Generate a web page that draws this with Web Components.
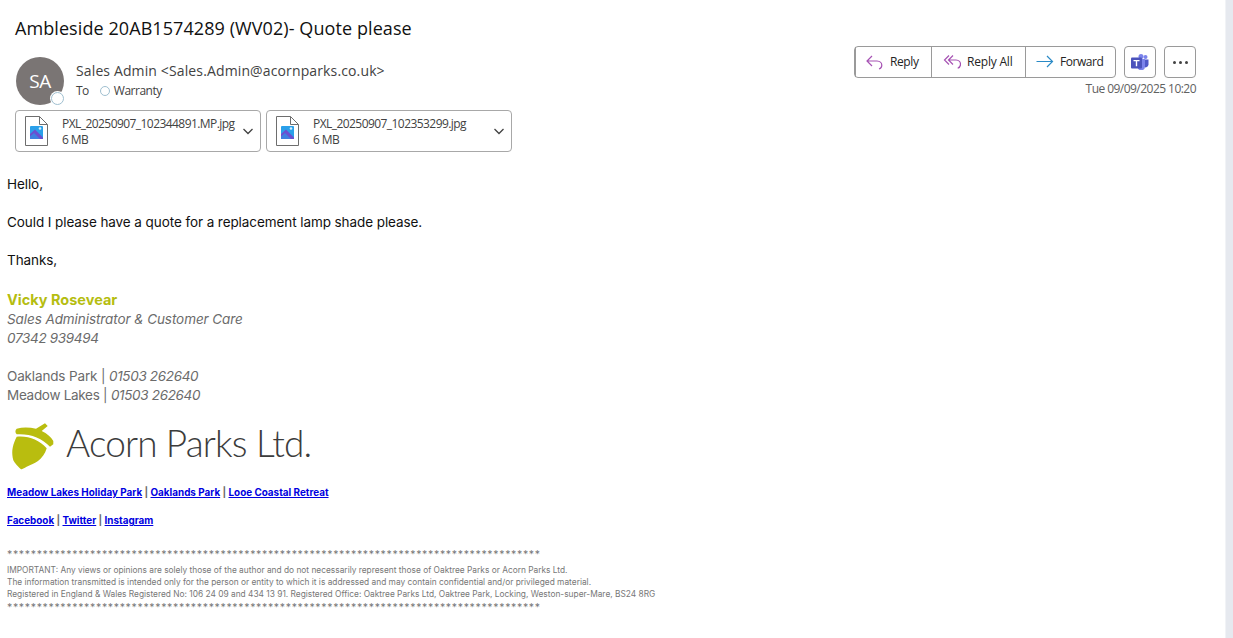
<!DOCTYPE html>
<html>
<head>
<meta charset="utf-8">
<title>Ambleside 20AB1574289 (WV02)- Quote please</title>
<style>
  html, body { margin: 0; height: 100%; background: #fff; overflow: hidden; }
  body { display: flex; height: 638px; }
  mail-view { flex: 1; min-width: 0; }
  side-strip { width: 8px; }
</style>
</head>
<body>
<mail-view>
  <mail-header></mail-header>
  <mail-body></mail-body>
</mail-view>
<side-strip></side-strip>

<script>
const UI_FONT = `"Open Sans", "Noto Sans", sans-serif`;
const BODY_FONT = `Inter, "Liberation Sans", sans-serif`;

class SideStrip extends HTMLElement {
    constructor() {
        super();
        this.attachShadow({ mode: 'open' });
        this.shadowRoot.innerHTML = `<style>
            :host { display: block; background: #e6e9ef; border-left: 1px solid #f1f3f6; box-sizing: border-box; }
        </style>`;
    }
}

class MailView extends HTMLElement {
    constructor() {
        super();
        this.attachShadow({ mode: 'open' });
        this.shadowRoot.innerHTML = `<style>
            :host { display: block; }
        </style><slot></slot>`;
    }
}

class ActionGroup extends HTMLElement {
    constructor() {
        super();
        this.attachShadow({ mode: 'open' });
        const icons = {
            reply: `<path d="M7 3 2 8l5 5M2.500 8H12c3.200 0 4.800 2.200 4.800 4.200 0 1.800-1.200 3.300-2.800 3.800" stroke="#a652b3"/>`,
            all: `<path d="M6 2.500 1.500 7 6 11.500M10 2.500 5.500 7l4.500 4.500M6 7h7c3 0 4.500 2.200 4.500 4.300 0 1.900-1.200 3.400-2.800 4" stroke="#a652b3"/>`,
            forward: `<path d="M11 3l5.500 5.500L11 14M.5 8.500h15.500" stroke="#2a8ac6"/>`
        };
        const item = (k, label, w, pad, gap, ls) => `<button style="width:${w}px;padding-left:${pad}px;gap:${gap}px;letter-spacing:${ls}px"><svg width="18" height="18" viewBox="0 0 18 18" fill="none" stroke-width="1.200">${icons[k]}</svg><span>${label}</span></button>`;
        this.shadowRoot.innerHTML = `<style>
            :host { display: flex; height: 32px; box-sizing: border-box; border: 1px solid #9a9a9a; border-radius: 4px; background: #fff; }
            button { all: unset; box-sizing: border-box; display: flex; align-items: center; font: 12px ${UI_FONT}; color: #242424; border-left: 1px solid #9a9a9a; }
            button:first-child { border-left: 0; }
            span { transform: translateY(-1px); }
            svg { flex: none; }
        </style>${item('reply', 'Reply', 76, 9, 7, -0.4)}${item('all', 'Reply All', 94, 11, 6, -0.2)}${item('forward', 'Forward', 90, 10, 6, -0.45)}`;
    }
}

class IconButton extends HTMLElement {
    constructor() {
        super();
        this.attachShadow({ mode: 'open' });
        this.shadowRoot.innerHTML = `<style>
            :host { display: flex; align-items: center; justify-content: center; width: 32px; height: 32px; box-sizing: border-box; border: 1px solid #9a9a9a; border-radius: 4px; background: #fff; }
        </style><slot></slot>`;
    }
}

class AttachmentCard extends HTMLElement {
    constructor() {
        super();
        this.attachShadow({ mode: 'open' });
        const name = this.getAttribute('name');
        const size = this.getAttribute('size');
        const w = this.getAttribute('width');
        this.shadowRoot.innerHTML = `<style>
            :host { display: flex; align-items: center; width: ${w}px; height: 42px; box-sizing: border-box; border: 1px solid #a8a8a8; border-radius: 4px; padding-left: 9px; background: #fff; }
            .text { flex: 1; margin-left: 14px; padding-top: 2px; font: 12px/16px ${UI_FONT}; letter-spacing: -0.56px; color: #424242; white-space: nowrap; }
            .chev { flex: none; margin-right: 6px; }
        </style>
        <svg width="23" height="30" viewBox="0 0 23 30" fill="none">
            <path d="M.5 .5h14l8 8v21H.5z" fill="#fff" stroke="#6e6e6e"/>
            <path d="M14.500 .5v8h8" stroke="#6e6e6e"/>
            <rect x="5" y="10" width="13" height="13" rx="1" fill="#2aa0ea"/>
            <path d="M5 23v-5l5-4.500 8 8V23z" fill="#6a4fd0"/>
            <path d="M5 23v-2.500l4-3.500 6 6z" fill="#3f7fe0"/>
            <circle cx="15" cy="12.500" r="1.300" fill="#d8f0ff"/>
        </svg>
        <div class="text"><div>${name}</div><div>${size}</div></div>
        <svg class="chev" width="12" height="12" viewBox="0 0 12 12" fill="none"><path d="M1.500 4 6 8.500 10.500 4" stroke="#424242" stroke-width="1.300"/></svg>`;
    }
}

class MailHeader extends HTMLElement {
    constructor() {
        super();
        this.attachShadow({ mode: 'open' });
        this.shadowRoot.innerHTML = `<style>
            :host { display: block; font-family: ${UI_FONT}; height: 152px; box-sizing: border-box; padding: 16px 29px 0 15px; }
            h1 { margin: 0; font: 400 18px/25px ${UI_FONT}; letter-spacing: 0.08px; color: #111; }
            .row { display: flex; justify-content: space-between; margin-top: 5px; height: 69px; }
            .who { display: flex; padding-top: 11px; }
            .avatar { position: relative; width: 48px; height: 48px; margin-left: 1px; border-radius: 50%; background: #7a7574; color: #fff; font: 19px/48px ${UI_FONT}; text-align: center; letter-spacing: -0.500px; }
            .presence { position: absolute; right: 0; bottom: 0; width: 11px; height: 11px; border-radius: 50%; border: 1px solid #9fbfd0; background: #fff; box-shadow: 0 0 0 1px #fff; }
            .lines { margin-left: 12px; padding-top: 5px; color: #424242; }
            .from { font: 14px/20px ${UI_FONT}; letter-spacing: 0.13px; margin-top: -1px; }
            .to { display: flex; align-items: center; font: 12px/17px ${UI_FONT}; letter-spacing: -0.5px; margin-top: 1px; }
            .dot { width: 8px; height: 8px; border-radius: 50%; border: 1px solid #9fbfd0; margin: 0 4px 0 11px; }
            .right { display: flex; flex-direction: column; align-items: flex-end; }
            .actions { display: flex; gap: 8px; }
            .date { font: 12px/16px ${UI_FONT}; letter-spacing: -0.54px; color: #616161; margin-top: 3px; }
            .atts { display: flex; gap: 5px; margin-top: -5px; }
            .dots { display: flex; gap: 3px; }
            .dots i { width: 3px; height: 3px; border-radius: 50%; background: #424242; }
        </style>
        <h1>Ambleside 20AB1574289 (WV02)- Quote please</h1>
        <div class="row">
            <div class="who">
                <div class="avatar">SA<span class="presence"></span></div>
                <div class="lines">
                    <div class="from">Sales Admin &lt;Sales.Admin@acornparks.co.uk&gt;</div>
                    <div class="to">To<span class="dot"></span>Warranty</div>
                </div>
            </div>
            <div class="right">
                <div class="actions">
                    <action-group></action-group>
                    <icon-button>
                        <svg width="18" height="16" viewBox="0 0 18 16">
                            <circle cx="14.500" cy="3" r="2" fill="#7b83eb"/>
                            <circle cx="10" cy="2.500" r="2.500" fill="#7b83eb"/>
                            <path d="M12 5.500h5.500v5a3 3 0 0 1-5.500 1.500z" fill="#5059c9"/>
                            <path d="M6 5h8v7.500a3.700 3.700 0 0 1-7.500 0z" fill="#7b83eb"/>
                            <rect x="0" y="3.500" width="11" height="11" rx="1" fill="#4b53bc"/>
                            <path d="M2.500 6h6v1.300h-2.300v5h-1.400v-5H2.500z" fill="#fff"/>
                        </svg>
                    </icon-button>
                    <icon-button><div class="dots"><i></i><i></i><i></i></div></icon-button>
                </div>
                <div class="date">Tue 09/09/2025 10:20</div>
            </div>
        </div>
        <div class="atts">
            <attachment-card name="PXL_20250907_102344891.MP.jpg" size="6 MB" width="246"></attachment-card>
            <attachment-card name="PXL_20250907_102353299.jpg" size="6 MB" width="246"></attachment-card>
        </div>`;
    }
}

class AcornLogo extends HTMLElement {
    constructor() {
        super();
        this.attachShadow({ mode: 'open' });
        this.shadowRoot.innerHTML = `<style>
            :host { display: flex; align-items: center; height: 50px; margin: 16px 0 0 5px; }
            span { font: 300 37px/50px Lato, "Open Sans", sans-serif; letter-spacing: -0.85px; color: #3c3c3c; margin-left: 12px; white-space: nowrap; transform: translateY(-3px); }
            svg { flex: none; }
        </style>
        <svg width="42" height="48" viewBox="0 0 42 48">
            <path d="M4.700 6.700C11 5 18 5.500 24 6.700L33 1.300 35.700 4 29.700 9C35 11.500 39 15 41.300 19V22.300L38 24.700C30 16 18 11.500 4.700 12.300 3 11 3 8 4.700 6.700z" fill="#b9bd0f"/>
            <path d="M4.700 14.700C16 13.500 27 17.500 34.700 26.300 33 32 30 36 26 39 22 41.500 19 42.500 16.300 44 14 45 12 46.500 9.700 47.300 8.800 47.300 8 46.500 7.300 45.700 3.500 42 1 39 .7 35.700 .2 32 0 29 .7 25.700 1.500 21.500 3 18 4.700 14.700z" fill="#b9bd0f"/>
        </svg>
        <span>Acorn Parks Ltd.</span>`;
    }
}

class MailBody extends HTMLElement {
    constructor() {
        super();
        this.attachShadow({ mode: 'open' });
        const stars = '*'.repeat(90);
        this.shadowRoot.innerHTML = `<style>
            :host { display: block; padding: 23px 0 0 7px; font: 13.500px/19px ${BODY_FONT}; letter-spacing: -0.08px; color: #111; }
            p { margin: 0 0 19px; }
            .sig { color: #6b6b6b; }
            .name { color: #b5bd10; font-weight: 700; font-size: 14.500px; letter-spacing: 0; line-height: 21px; margin-top: 1px; }
            .sig i { font-style: italic; }
            .num { letter-spacing: -0.33px; }
            .blank { height: 19px; }
            .links { font: 700 9.900px/13px ${BODY_FONT}; letter-spacing: 0; color: #6b6b6b; margin: 15px 0; }
            a { color: #0000e0; text-decoration: underline; }
            .legal { font: 8.350px/12px ${BODY_FONT}; letter-spacing: 0; color: #777; margin-top: 21px; white-space: nowrap; }
            .legal .st { font-size: 10.500px; line-height: 14px; letter-spacing: .67px; }
            .legal .txt { margin: 2px 0 1px; }
        </style>
        <p>Hello,</p>
        <p>Could I please have a quote for a replacement lamp shade please.</p>
        <p>Thanks,</p>
        <div class="sig">
            <div class="name">Vicky Rosevear</div>
            <div><i>Sales Administrator &amp; Customer Care</i></div>
            <div><i class="num">07342 939494</i></div>
            <div class="blank"></div>
            <div><span style="letter-spacing:-0.15px">Oaklands Park |</span> <i class="num">01503 262640</i></div>
            <div><span style="letter-spacing:-0.3px">Meadow Lakes |</span> <i class="num">01503 262640</i></div>
        </div>
        <acorn-logo></acorn-logo>
        <div class="links"><a>Meadow Lakes Holiday Park</a> | <a>Oaklands Park</a> | <a>Looe Coastal Retreat</a></div>
        <div class="links"><a>Facebook</a> | <a>Twitter</a> | <a>Instagram</a></div>
        <div class="legal">
            <div class="st">${stars}</div>
            <div class="txt">IMPORTANT: Any views or opinions are solely those of the author and do not necessarily represent those of Oaktree Parks or Acorn Parks Ltd.<br>
            The information transmitted is intended only for the person or entity to which it is addressed and may contain confidential and/or privileged material.<br>
            Registered in England &amp; Wales Registered No: 106 24 09 and 434 13 91. Registered Office: Oaktree Parks Ltd, Oaktree Park, Locking, Weston-super-Mare, BS24 8RG</div>
            <div class="st">${stars}</div>
        </div>`;
    }
}

customElements.define('side-strip', SideStrip);
customElements.define('mail-view', MailView);
customElements.define('action-group', ActionGroup);
customElements.define('icon-button', IconButton);
customElements.define('attachment-card', AttachmentCard);
customElements.define('mail-header', MailHeader);
customElements.define('acorn-logo', AcornLogo);
customElements.define('mail-body', MailBody);
</script>
</body>
</html>
